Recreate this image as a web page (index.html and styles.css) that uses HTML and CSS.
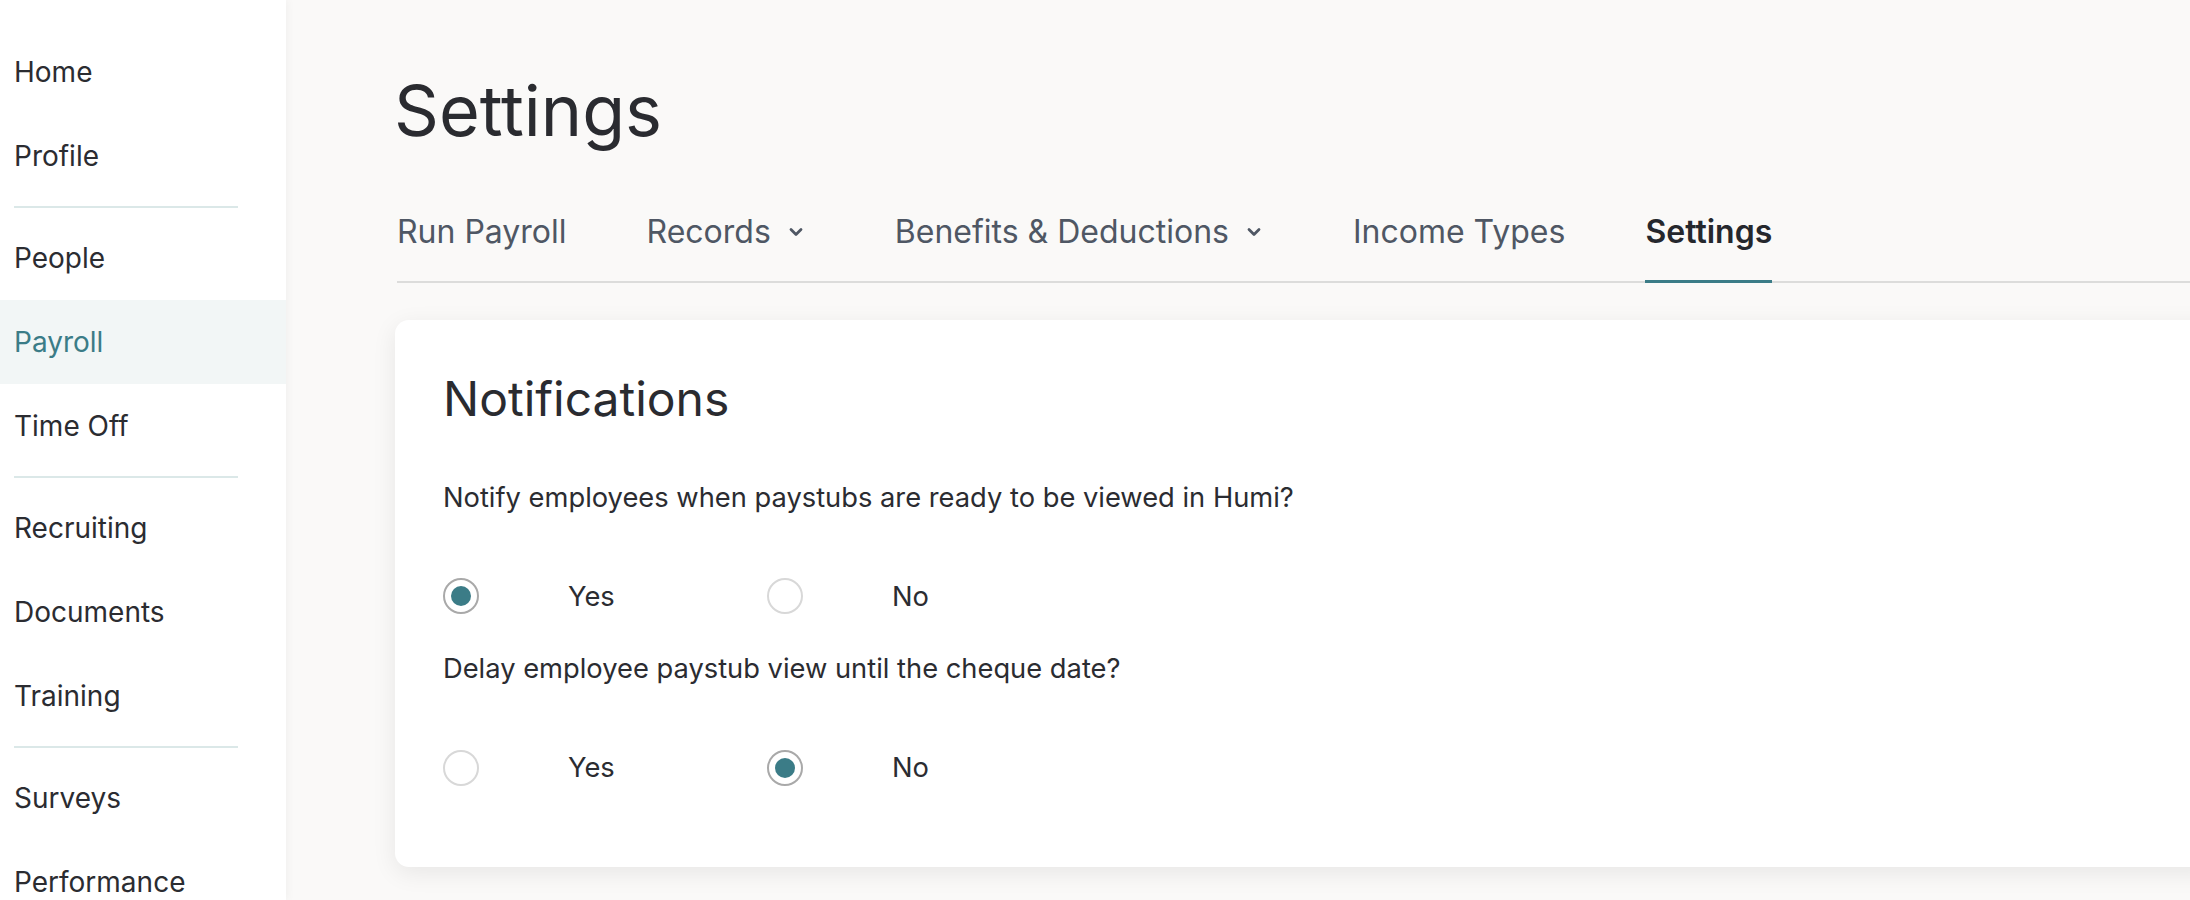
FILE: index.html
```html
<!DOCTYPE html>
<html lang="en">
<head>
  <meta charset="UTF-8">
  <title>Payroll Settings</title>
  <link rel="stylesheet" href="styles.css">
</head>
<body>
  <div class="layout">
    <nav class="sidebar">
      <a class="nav-item">Home</a>
      <a class="nav-item">Profile</a>
      <div class="nav-divider"></div>
      <a class="nav-item">People</a>
      <a class="nav-item active">Payroll</a>
      <a class="nav-item">Time Off</a>
      <div class="nav-divider"></div>
      <a class="nav-item">Recruiting</a>
      <a class="nav-item">Documents</a>
      <a class="nav-item">Training</a>
      <div class="nav-divider"></div>
      <a class="nav-item">Surveys</a>
      <a class="nav-item">Performance</a>
    </nav>

    <main class="main">
      <h1 class="page-title">Settings</h1>

      <div class="tabs">
        <a class="tab">Run Payroll</a>
        <a class="tab">Records
          <svg class="chevron" viewBox="0 0 18 12" width="18" height="12"><path d="M4 3.5 L9 8.5 L14 3.5" fill="none" stroke="currentColor" stroke-width="2.8" stroke-linecap="round" stroke-linejoin="round"/></svg>
        </a>
        <a class="tab">Benefits &amp; Deductions
          <svg class="chevron" viewBox="0 0 18 12" width="18" height="12"><path d="M4 3.5 L9 8.5 L14 3.5" fill="none" stroke="currentColor" stroke-width="2.8" stroke-linecap="round" stroke-linejoin="round"/></svg>
        </a>
        <a class="tab">Income Types</a>
        <a class="tab active">Settings</a>
      </div>

      <section class="card">
        <h2 class="card-title">Notifications</h2>

        <p class="question">Notify employees when paystubs are ready to be viewed in Humi?</p>
        <div class="options">
          <label class="option"><span class="radio checked"><span class="dot"></span></span><span class="option-label">Yes</span></label>
          <label class="option"><span class="radio"></span><span class="option-label">No</span></label>
        </div>

        <p class="question second">Delay employee paystub view until the cheque date?</p>
        <div class="options">
          <label class="option"><span class="radio"></span><span class="option-label">Yes</span></label>
          <label class="option"><span class="radio checked"><span class="dot"></span></span><span class="option-label">No</span></label>
        </div>
      </section>
    </main>
  </div>
</body>
</html>
```

FILE: styles.css
```css
body {
  margin: 0;
  font-family: Inter, "Noto Sans", Arial, sans-serif;
  color: #2b2c31;
  background-color: #faf9f8;
  overflow: hidden;
}

.layout {
  display: flex;
  height: 900px;
}

/* sidebar */
.sidebar {
  width: 286px;
  flex-shrink: 0;
  background: #fff;
  padding-top: 30px;
  box-shadow: 2px 0 8px rgba(0, 0, 0, 0.04);
  overflow: hidden;
  position: relative;
  z-index: 1;
}

.nav-item {
  display: block;
  height: 84px;
  line-height: 84px;
  padding-left: 14px;
  font-size: 28px;
  color: #2b2c31;
}

.nav-item.active {
  background: #f2f6f6;
  color: #3b7c87;
}

.nav-divider {
  height: 2px;
  width: 224px;
  margin: 8px 0 8px 14px;
  background: #dbe8e8;
}

/* main */
.main {
  flex: 1;
  padding: 76px 0 0 111px;
  overflow: hidden;
}

.page-title {
  margin: 0 0 0 -3px;
  font-size: 70px;
  font-weight: 400;
  line-height: 1;
  color: #2a2b30;
}

.tabs {
  display: flex;
  margin-top: 70px;
  border-bottom: 2px solid #dcdcdb;
}

.tab {
  display: flex;
  align-items: center;
  font-size: 32px;
  line-height: 1;
  padding-bottom: 33px;
  margin-right: 80px;
  margin-bottom: -2px;
  border-bottom: 2px solid transparent;
  color: #4f5764;
  white-space: nowrap;
}

.tab.active {
  color: #25272d;
  font-weight: 600;
  border-bottom: 3px solid #3b7c87;
  padding-bottom: 32px;
}

.chevron {
  margin-left: 16px;
  margin-right: 10px;
}

/* card */
.card {
  margin: 37px -30px 0 -2px;
  padding: 55px 48px 81px 48px;
  background: #fff;
  border-radius: 14px;
  box-shadow: 0 6px 24px rgba(0, 0, 0, 0.08);
}

.card-title {
  margin: 0;
  font-size: 48px;
  font-weight: 400;
  line-height: 1;
  color: #2a2b30;
}

.question {
  margin: 61px 0 0 0;
  font-size: 27.3px;
  line-height: 1;
}

.question.second {
  margin-top: 41px;
}

.options {
  display: flex;
  margin-top: 67px;
}

.option {
  display: flex;
  align-items: center;
  width: 324px;
}

.radio {
  width: 36px;
  height: 36px;
  box-sizing: border-box;
  border: 2px solid #d8d8d8;
  border-radius: 50%;
  background: #fff;
  display: flex;
  justify-content: center;
  align-items: center;
}

.radio.checked {
  border-color: #a9a9a9;
}

.dot {
  width: 20px;
  height: 20px;
  border-radius: 50%;
  background: #3b7c87;
}

.option-label {
  margin-left: 89px;
  font-size: 27.3px;
}
```
